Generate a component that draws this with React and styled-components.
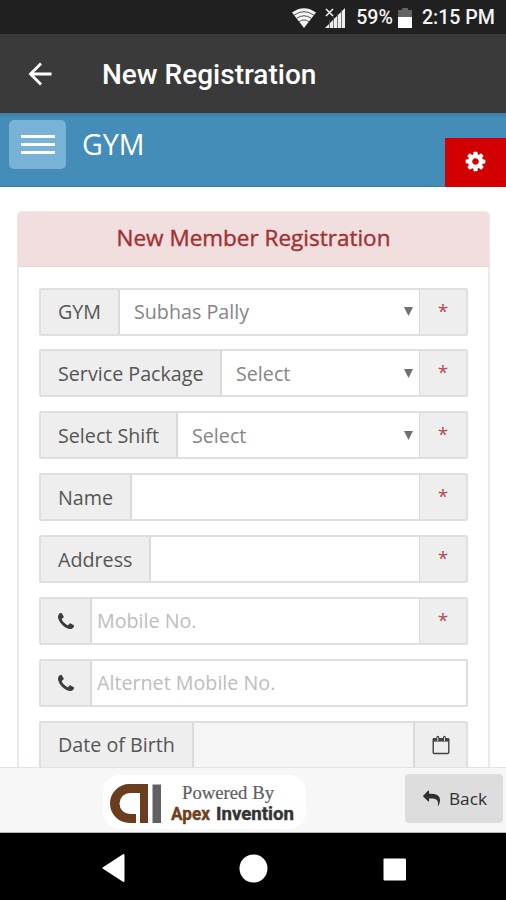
import React from 'react';
import styled, { createGlobalStyle } from 'styled-components';

const GlobalStyle = createGlobalStyle`
  * {
    box-sizing: border-box;
  }

  body {
    margin: 0;
    background: #fff;
    font-family: 'Open Sans', 'Noto Sans', sans-serif;
  }

  svg {
    display: block;
    flex-shrink: 0;
  }
`;

const Screen = styled.div`
  display: flex;
  flex-direction: column;
  width: 506px;
  height: 900px;
  overflow: hidden;
  background: #fff;
`;

const StatusBar = styled.div`
  display: flex;
  flex-shrink: 0;
  align-items: center;
  justify-content: flex-end;
  height: 34px;
  padding: 2px 11px 0 0;
  background: #202020;
  color: #f4f4f4;
  font: 500 19.6px/1 Roboto, sans-serif;
`;

const Signal = styled.svg`
  margin: 0 11px 0 9px;
`;

const Battery = styled.svg`
  margin: 0 10px 0 5px;
`;

const AppBar = styled.header`
  display: flex;
  flex-shrink: 0;
  align-items: center;
  gap: 50px;
  height: 79px;
  padding: 0 0 0 28px;
  background: #3a3a3a;
  color: #fff;
`;

const AppTitle = styled.h1`
  margin: 3px 0 0;
  font: 500 28px/1 Roboto, sans-serif;
`;

const NavBar = styled.nav`
  display: flex;
  flex-shrink: 0;
  align-items: flex-start;
  height: 74px;
  padding-left: 9px;
  background: linear-gradient(#3f7da3 0, #438db8 5px, #438db8 72px, #357ca5 74px);
`;

const MenuButton = styled.button`
  display: flex;
  flex-direction: column;
  align-items: center;
  justify-content: center;
  gap: 5px;
  width: 57px;
  height: 49px;
  margin-top: 7px;
  padding: 0;
  border: 0;
  border-radius: 5px;
  background: #78b2d7;
`;

const MenuLine = styled.span`
  width: 34px;
  height: 3px;
  background: #fff;
`;

const Brand = styled.span`
  flex: 1;
  margin: 13px 0 0 16px;
  color: #fff;
  font-size: 28.6px;
  line-height: 36px;
`;

const SettingsButton = styled.button`
  display: flex;
  align-items: center;
  justify-content: center;
  align-self: flex-end;
  width: 61px;
  height: 49px;
  padding: 0 0 2px;
  border: 0;
  background: #d20000;
  color: #fff;
`;

const Content = styled.main`
  flex: 1;
  min-height: 0;
  padding: 24px 16px 0 17px;
  overflow: hidden;
`;

const Panel = styled.section`
  border: 2px solid #f3e6e8;
  border-radius: 5px;
`;

const PanelHeading = styled.h2`
  margin: -1px -1px 0;
  height: 55px;
  padding-top: 9px;
  border-bottom: 1px solid #edd6d9;
  border-radius: 4px 4px 0 0;
  background: #f1dede;
  color: #a23133;
  font-size: 22.5px;
  font-weight: 500;
  line-height: 34px;
  text-align: center;
  -webkit-text-stroke: 0.4px #a23133;
`;

const Form = styled.form`
  display: flex;
  flex-direction: column;
  gap: 13.9px;
  padding: 20.5px 20px 20px;
`;

const InputGroup = styled.div`
  display: flex;
  flex-shrink: 0;
  height: 48px;
  border: 2px solid #dfdfdf;
  border-radius: 2px;
  background: ${(p) => (p.$disabled ? '#f5f5f5' : '#fff')};
`;

const Addon = styled.label`
  display: flex;
  align-items: center;
  width: ${(p) => p.$width}px;
  padding-left: 17px;
  border-right: 2px solid #dadada;
  background: #eee;
  color: #555;
  font-size: 19.7px;
  white-space: nowrap;
`;

const Field = styled.div`
  display: flex;
  flex: 1;
  align-items: center;
  justify-content: space-between;
  padding: 0 6px 0 ${(p) => (p.$select ? 14 : 5)}px;
  color: ${(p) => (p.$select ? '#858585' : '#bdbdbd')};
  font-size: 19.7px;
`;

const EndAddon = styled.span`
  display: flex;
  align-items: center;
  justify-content: center;
  width: ${(p) => (p.$wide ? 53 : 47)}px;
  padding-bottom: ${(p) => (p.$wide ? 0 : 2)}px;
  border-left: ${(p) => (p.$wide ? 2 : 1)}px solid #dadada;
  background: #eee;
  color: #b44a4e;
  font-size: 19px;
`;

const Footer = styled.footer`
  display: flex;
  flex-shrink: 0;
  align-items: flex-start;
  justify-content: space-between;
  height: 66px;
  padding: 7px 3px 0 103px;
  border-top: 1px solid #e2e2e2;
  border-bottom: 1px solid #b5b5b5;
  background: #f7f7f7;
`;

const PoweredBy = styled.div`
  width: 203px;
  height: 54px;
  border-radius: 17px;
  background: #fff;
`;

const BackButton = styled.button`
  display: flex;
  align-items: center;
  gap: 9px;
  width: 98px;
  height: 49px;
  margin-top: -1px;
  padding: 0 0 1px 18px;
  border: 0;
  border-radius: 4px;
  background: #ddd;
  color: #2f2f2f;
  font: 500 17.2px 'Open Sans', sans-serif;
`;

const SystemNav = styled.div`
  flex-shrink: 0;
  height: 67px;
  background: #000;
`;

const rows = [
  { label: 'GYM', width: 79, value: 'Subhas Pally', select: true, required: true },
  { label: 'Service Package', width: 181, value: 'Select', select: true, required: true },
  { label: 'Select Shift', width: 137, value: 'Select', select: true, required: true },
  { label: 'Name', width: 91, required: true },
  { label: 'Address', width: 110, required: true },
  { phone: true, width: 51, value: 'Mobile No.', required: true },
  { phone: true, width: 51, value: 'Alternet Mobile No.' },
  { label: 'Date of Birth', width: 153, date: true },
];

function PhoneIcon() {
  return (
    <svg width="16" height="16" viewBox="0 0 1408 1408" fill="#3c3c3c">
      <path d="M1408 1112q0 27-10 70.5t-21 68.5q-21 50-122 106-94 51-186 51-27 0-53-3.5t-57.5-12.5-47-14.5-55.5-20.5-49-18q-98-35-175-83-127-79-264-216t-216-264q-48-77-83-175-3-9-18-49t-20.5-55.5-14.5-47-12.5-57.5-3.5-53q0-92 51-186 56-101 106-122 25-11 68.5-21t70.5-10q14 0 21 3 18 6 53 76 11 19 30 54t35 63.5 31 53.5q3 4 17.5 25t21.5 35.5 7 28.5q0 20-28.5 50t-62 55-62 53-28.5 46q0 9 5 22.5t8.5 20.5 14 24 11.5 19q76 137 174 235t235 174q2 1 19 11.5t24 14 20.5 8.5 22.5 5q18 0 46-28.5t53-62 55-62 50-28.5q14 0 28.5 7t35.5 21.5 25 17.5q25 15 53.5 31t63.5 35 54 30q70 35 76 53 3 7 3 21z" />
    </svg>
  );
}

function GearIcon() {
  return (
    <svg width="23" height="23" viewBox="0 0 1792 1792" fill="currentColor">
      <path d="M1152 896q0-106-75-181t-181-75-181 75-75 181 75 181 181 75 181-75 75-181zm512-109v222q0 12-8 23t-20 13l-185 28q-19 54-39 91 35 50 107 138 10 12 10 25t-9 23q-27 37-99 108t-94 71q-12 0-26-9l-138-108q-44 23-91 38-16 136-29 186-7 28-36 28h-222q-14 0-24.5-8.5t-11.5-21.5l-28-184q-49-16-90-37l-141 107q-10 9-25 9-14 0-25-11-126-114-165-168-7-10-7-23 0-12 8-23 15-21 51-66.5t54-70.5q-27-50-41-99l-183-27q-13-2-21-12.5t-8-23.5v-222q0-12 8-23t19-13l186-28q14-46 39-92-40-57-107-138-10-12-10-24 0-10 9-23 26-36 98.5-107.5t94.5-71.5q13 0 26 10l138 107q44-23 91-38 16-136 29-186 7-28 36-28h222q14 0 24.5 8.5t11.5 21.5l28 184q49 16 90 37l142-107q9-9 24-9 13 0 25 10 129 119 165 170 7 8 7 22 0 12-8 23-15 21-51 66.5t-54 70.5q26 50 41 98l183 28q13 2 21 12.5t8 23.5z" />
    </svg>
  );
}

function ReplyIcon() {
  return (
    <svg width="17" height="17" viewBox="0 0 1792 1792" fill="currentColor">
      <path
        transform="translate(1792 0) scale(-1 1)"
        d="M1792 640q0 26-19 45l-512 512q-19 19-45 19t-45-19-19-45v-256h-224q-98 0-175.5 6t-154 21.5-133 42.5-105.5 69.5-80 101-48.5 138.5-17.5 181q0 55 5 123 0 6 2.5 23.5t2.5 26.5q0 15-8.5 25t-23.5 10q-16 0-28-17-7-9-13-22t-13.5-30-10.5-24q-127-285-127-451 0-199 53-333 162-403 875-403h224v-256q0-26 19-45t45-19 45 19l512 512q19 19 19 45z"
      />
    </svg>
  );
}

function CalendarIcon() {
  return (
    <svg width="18" height="20" viewBox="0 0 18 20" fill="none" stroke="#444">
      <path d="M1.2 4.5h15.6v12.8q0 1.2-1.2 1.2H2.4q-1.2 0-1.2-1.2z" strokeWidth="1.4" />
      <path d="M1 4.8h16" strokeWidth="3.6" />
      <path d="M4.8 6V3q0-1.6 1-1.6t1 1.6v3M11.4 6V3q0-1.6 1-1.6t1 1.6v3" fill="#eee" strokeWidth="1.1" />
    </svg>
  );
}

function ApexLogo() {
  return (
    <svg width="203" height="56" viewBox="0 0 203 56">
      <path d="M45 9v39h-8V18H27a10.5 10.5 0 0 0 0 21h6v9h-6.5a19.5 19.5 0 0 1 0-39z" fill="#6b3c1e" />
      <path d="M49.5 9.5H58V48h-8.5z" fill="#626262" />
      <text x="79" y="24" fontFamily="'Liberation Serif', serif" fontSize="18" fill="#606060" stroke="#606060" strokeWidth="0.2" textLength="92" lengthAdjust="spacingAndGlyphs">Powered By</text>
      <g fontFamily="Roboto, sans-serif" fontWeight="700" fontSize="18.5" strokeWidth="0.4">
        <text x="68" y="44.5" fill="#713f20" stroke="#713f20" textLength="39" lengthAdjust="spacingAndGlyphs">Apex</text>
        <text x="113" y="44.5" fill="#333" stroke="#333" textLength="78" lengthAdjust="spacingAndGlyphs">Invention</text>
      </g>
    </svg>
  );
}

function FormRow({ row }) {
  return (
    <InputGroup $disabled={row.date}>
      <Addon $width={row.width}>{row.phone ? <PhoneIcon /> : row.label}</Addon>
      <Field $select={row.select}>
        <span>{row.value}</span>
        {row.select && (
          <svg width="9" height="9" viewBox="0 0 9 9" fill="#707070">
            <path d="M0 0h9L4.5 9z" />
          </svg>
        )}
      </Field>
      {row.required && <EndAddon>*</EndAddon>}
      {row.date && (
        <EndAddon $wide>
          <CalendarIcon />
        </EndAddon>
      )}
    </InputGroup>
  );
}

function App() {
  return (
    <>
      <GlobalStyle />
      <Screen>
        <StatusBar>
          <svg width="24" height="20" viewBox="0 0 24 20">
            <path d="M0 4.5Q12-4 24 4.5L12 20z" fill="#f4f4f4" />
            <path d="M2 7.2q10-7 20 0M4.5 10.5q7.5-5.5 15 0M7 13.7q5-3.5 10 0" fill="none" stroke="#555" strokeWidth="1" />
          </svg>
          <Signal width="20" height="20" viewBox="0 0 20 20">
            <path d="M20 0v20H0z" fill="#eee" />
            <path d="M4.5 12v8M8.5 8v12M12.5 5v15M16.5 2v18" stroke="#555" strokeWidth="0.8" />
            <path d="M0 0h9v9H0z" fill="#202020" />
            <path d="M1 1l7 7M8 1L1 8" stroke="#eee" strokeWidth="1.6" />
          </Signal>
          <span>59%</span>
          <Battery width="14" height="20" viewBox="0 0 14 20">
            <path d="M4 0h6v2h4v7H0V2h4z" fill="#626262" />
            <path d="M0 9h14v11H0z" fill="#fff" />
          </Battery>
          <span>2:15 PM</span>
        </StatusBar>

        <AppBar>
          <svg width="24" height="24" viewBox="0 0 24 24" fill="none" stroke="#fff" strokeWidth="2.8">
            <path d="M23.5 12H3M13 1.5L2.5 12 13 22.5" />
          </svg>
          <AppTitle>New Registration</AppTitle>
        </AppBar>

        <NavBar>
          <MenuButton>
            <MenuLine />
            <MenuLine />
            <MenuLine />
          </MenuButton>
          <Brand>GYM</Brand>
          <SettingsButton>
            <GearIcon />
          </SettingsButton>
        </NavBar>

        <Content>
          <Panel>
            <PanelHeading>New Member Registration</PanelHeading>
            <Form>
              {rows.map((row, i) => (
                <FormRow key={i} row={row} />
              ))}
            </Form>
          </Panel>
        </Content>

        <Footer>
          <PoweredBy>
            <ApexLogo />
          </PoweredBy>
          <BackButton>
            <ReplyIcon />
            Back
          </BackButton>
        </Footer>

        <SystemNav>
          <svg width="506" height="67" viewBox="0 0 506 67" fill="#fff">
            <path d="M103.5 35l20-13v26z" strokeWidth="2" stroke="#fff" strokeLinejoin="round" />
            <circle cx="253.5" cy="35.5" r="14" />
            <rect x="383.5" y="25.5" width="22.5" height="22" rx="1" />
          </svg>
        </SystemNav>
      </Screen>
    </>
  );
}

export default App;
